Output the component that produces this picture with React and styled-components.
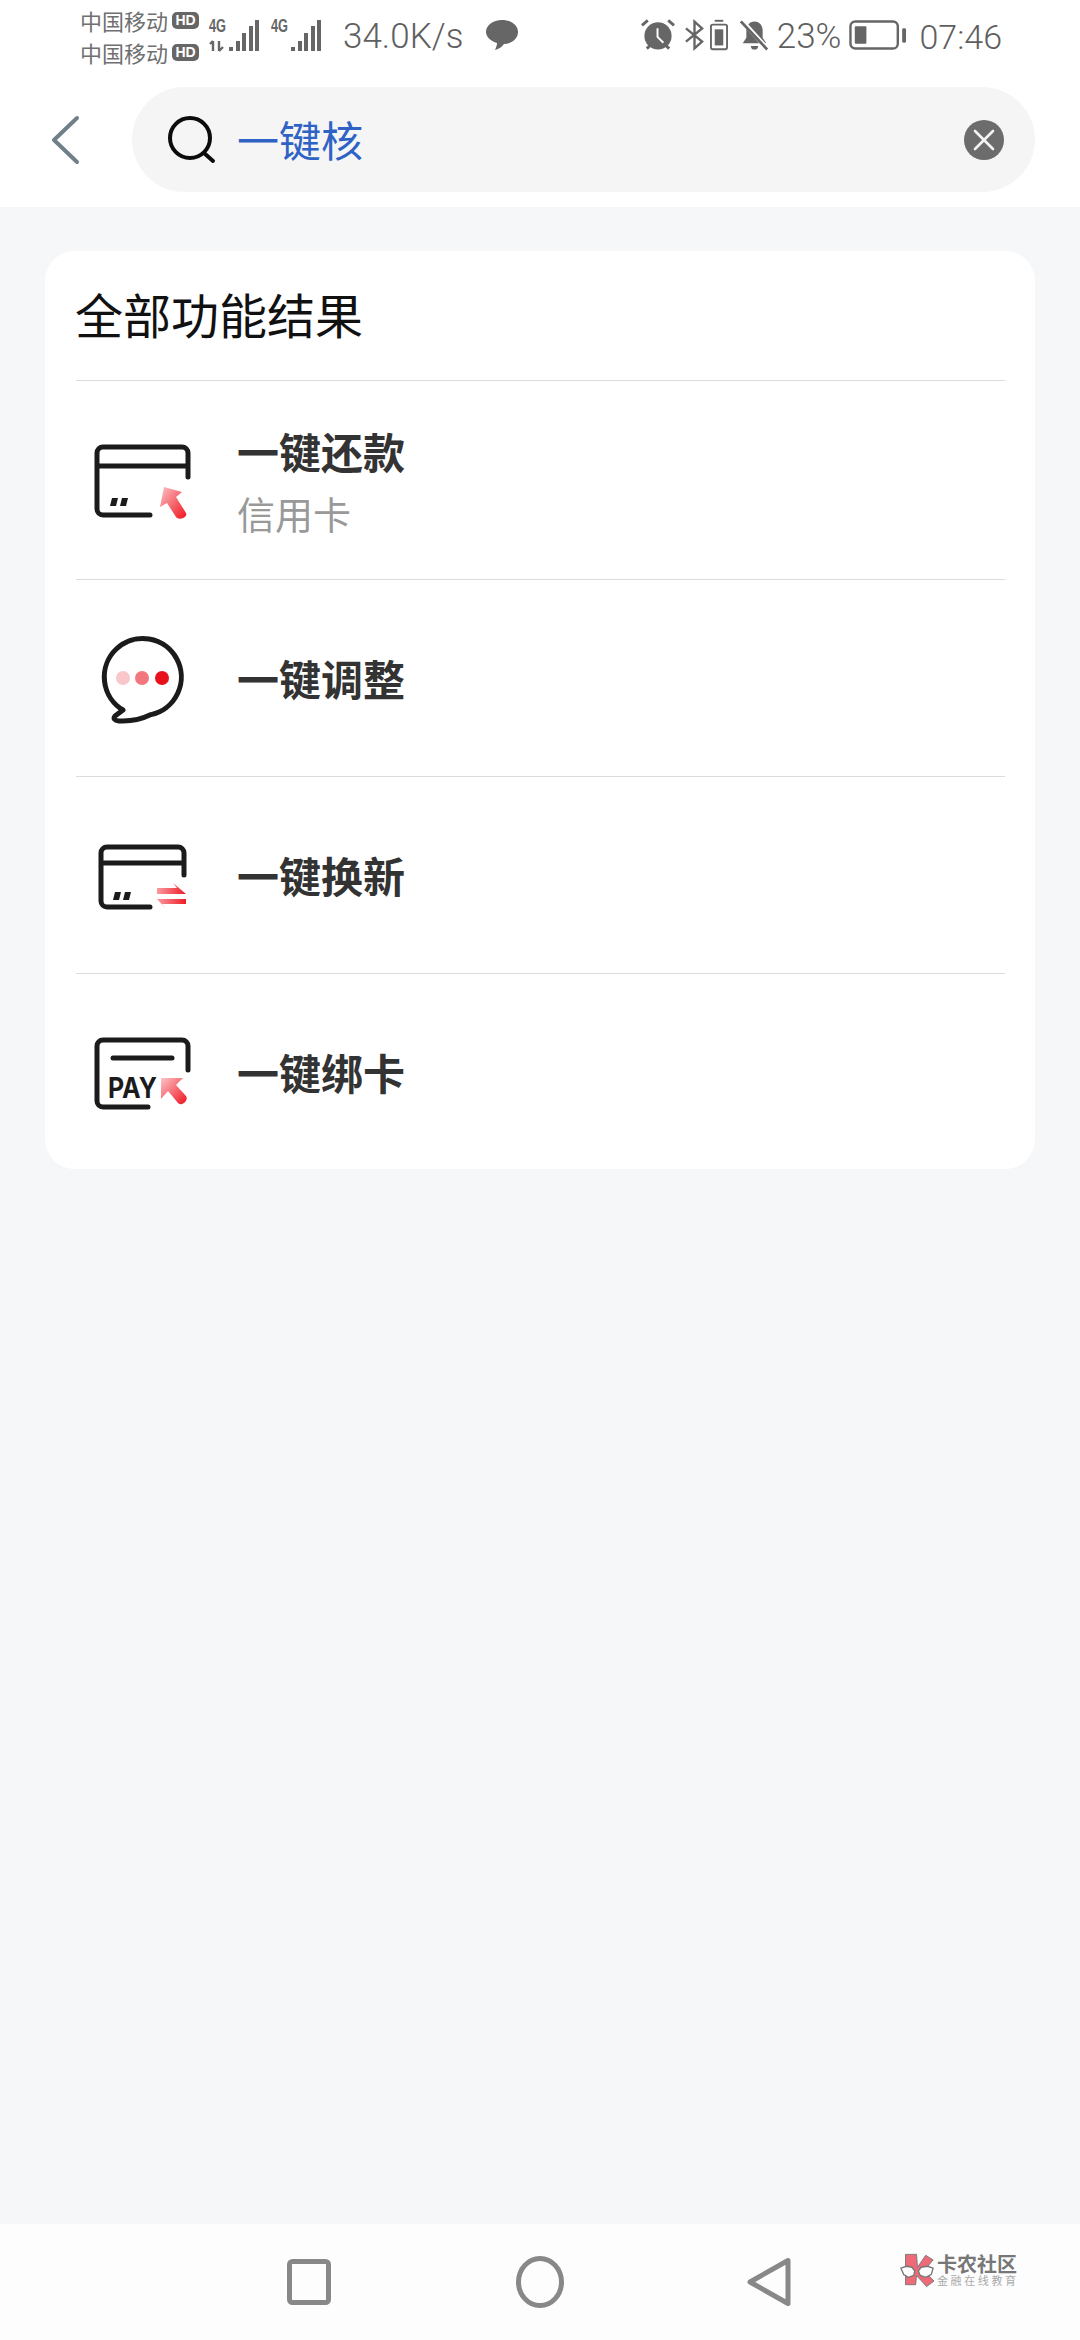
import React from 'react'
import styled, { createGlobalStyle } from 'styled-components'

const GlobalStyle = createGlobalStyle`
  * { box-sizing: border-box; }
  html, body { margin: 0; padding: 0; background: #f6f7f9; }
  body { font-family: "Noto Sans CJK SC", "Noto Sans", sans-serif; }
`

const Page = styled.div`
  width: 1080px;
  height: 2340px;
  display: flex;
  flex-direction: column;
  background: #f6f7f9;
  overflow: hidden;
  position: relative;
`
const Header = styled.header`
  height: 207px;
  background: #fff;
  flex-shrink: 0;
`
const StatusBar = styled.div`
  height: 70px;
  padding: 0 78px 0 80px;
  display: flex;
  align-items: center;
  justify-content: space-between;
  color: #666;
`
const StatusGroup = styled.div`
  display: flex;
  align-items: center;
`
const Carriers = styled.div`
  display: flex;
  flex-direction: column;
  gap: 8px;
  margin-top: 2px;
`
const Carrier = styled.div`
  display: flex;
  align-items: center;
  gap: 4px;
  height: 24px;
  font-size: 22px;
  line-height: 24px;
  color: #707070;
`
const HdBadge = styled.span`
  width: 27px;
  height: 17px;
  border-radius: 5px;
  background: #666;
  color: #fff;
  font: 700 14px/17px "Liberation Sans", sans-serif;
  text-align: center;
`
const StatusText = styled.span`
  margin-left: ${p => p.$ml || 0}px;
  margin-top: 4px;
  font-family: Roboto, "Noto Sans", sans-serif;
  font-weight: 300;
  font-size: ${p => p.$size || 35}px;
  line-height: 40px;
  color: #5f5f5f;
`
const StatusIcon = styled.svg`
  display: block;
  flex-shrink: 0;
  margin-left: ${p => p.$ml || 0}px;
`
const SearchRow = styled.div`
  height: 105px;
  margin-top: 17px;
  padding-left: 45px;
  display: flex;
  align-items: center;
`
const BackIcon = styled.svg`
  width: 40px;
  height: 50px;
  margin-right: 47px;
  flex-shrink: 0;
`
const SearchPill = styled.div`
  width: 903px;
  height: 105px;
  border-radius: 53px;
  background: #f5f5f6;
  display: flex;
  align-items: center;
  padding: 0 30px 0 32px;
`
const SearchIcon = styled.svg`
  width: 56px;
  height: 56px;
  margin-right: 17px;
  flex-shrink: 0;
`
const SearchText = styled.span`
  flex: 1;
  margin-top: -2px;
  font-size: 42px;
  line-height: 60px;
  color: #2f62c5;
`
const ClearIcon = styled.svg`
  width: 42px;
  height: 42px;
`
const Card = styled.section`
  margin: 44px 45px 0;
  padding: 0 30px 0 31px;
  background: #fff;
  border-radius: 30px;
`
const CardTitle = styled.h2`
  margin: 0 0 0 -1px;
  height: 129px;
  padding-top: 28px;
  font-size: 48px;
  line-height: 68px;
  font-weight: 400;
  color: #111;
`
const Row = styled.div`
  height: ${p => p.$height}px;
  border-top: 1px solid #dcdcdc;
  display: flex;
  align-items: center;
`
const RowIcon = styled.svg`
  width: 161px;
  height: 100px;
  flex-shrink: 0;
`
const RowText = styled.div`
  display: flex;
  flex-direction: column;
`
const RowTitle = styled.div`
  font-size: 42px;
  line-height: 60px;
  font-weight: 700;
  color: #333;
`
const RowSub = styled.div`
  font-size: 38px;
  line-height: 54px;
  margin-top: 5px;
  color: #999;
`
const NavBar = styled.nav`
  margin-top: auto;
  height: 116px;
  background: #fdfdfd;
  display: flex;
  align-items: center;
  padding-left: 279px;
  gap: 171px;
`
const NavIcon = styled.svg`
  width: 60px;
  height: 60px;
  fill: none;
  stroke: #888;
  stroke-width: 5;
  stroke-linejoin: round;
`
const Watermark = styled.div`
  position: absolute;
  left: 900px;
  top: 2253px;
  display: flex;
  align-items: center;
  gap: 3px;
`
const MarkText = styled.div`
  display: flex;
  flex-direction: column;
`
const MarkName = styled.span`
  font-size: 20px;
  line-height: 21px;
  font-weight: 700;
  color: #777;
`
const MarkSlogan = styled.span`
  font-size: 11px;
  line-height: 13px;
  letter-spacing: 2.6px;
  color: #aaa;
`

const Defs = () => (
  <svg width="0" height="0" style={{ position: 'absolute' }}>
    <defs>
      <linearGradient id="redUp" x1="0" y1="0" x2="1" y2="1">
        <stop offset="0" stopColor="#fbc4c8" />
        <stop offset="1" stopColor="#f0141e" />
      </linearGradient>
      <linearGradient id="redSide" x1="0" y1="0" x2="1" y2="0">
        <stop offset="0" stopColor="#fa9aa0" />
        <stop offset="1" stopColor="#ee1c25" />
      </linearGradient>
    </defs>
  </svg>
)

const Signal = ({ data, ml }) => (
  <StatusIcon $ml={ml} width="52" height="36" viewBox="0 0 52 36">
    <text x="0" y="15" fontFamily="Liberation Sans" fontWeight="700" fontSize="18" fill="#666" textLength="17" lengthAdjust="spacingAndGlyphs">4G</text>
    {data && (
      <path d="M4 24v10M1 27l3-3M10 24v10M10 34l4-4" stroke="#666" strokeWidth="2.4" fill="none" />
    )}
    <g fill="#666">
      <rect x="20" y="30" width="4" height="4" />
      <rect x="27" y="24" width="4" height="10" />
      <rect x="33" y="16" width="4" height="18" />
      <rect x="40" y="9" width="4" height="25" />
      <rect x="46" y="3" width="4" height="31" />
    </g>
  </StatusIcon>
)

// card frame, open at the lower right corner; the band line is left out when m is not given
const CardOutline = ({ l, r, t, m, b, rEnd, bEnd }) => (
  <path
    d={`M${r} ${rEnd}V${t + 6}a6 6 0 0 0-6-6H${l + 6}a6 6 0 0 0-6 6V${b - 6}a6 6 0 0 0 6 6H${bEnd}${m ? `M${l} ${m}H${r}` : ''}`}
    fill="none"
    stroke="#1b1b1b"
    strokeWidth="5"
    strokeLinecap="round"
  />
)

const Dashes = ({ x, y }) => (
  <g fill="#1b1b1b">
    <path d={`M${x + 2} ${y}h6l-2 8h-6z`} />
    <path d={`M${x + 12} ${y}h6l-2 8h-6z`} />
  </g>
)

const RepayIcon = () => (
  <RowIcon viewBox="0 0 161 100">
    <CardOutline l={21} r={112} t={17} m={36} b={85} rEnd={47} bEnd={74} />
    <Dashes x={34} y={68} />
    <path d="M88 57L106 62 100 67 110 83C112 87 103 91 100 87L91 73 84 77z" fill="url(#redUp)" />
  </RowIcon>
)

const AdjustIcon = () => (
  <RowIcon viewBox="0 0 161 100">
    <path
      d="M47 82A38.5 38.5 0 1 1 75 86.6Q60 94 43 93Q36 92 39 88z"
      fill="none"
      stroke="#1b1b1b"
      strokeWidth="5"
      strokeLinejoin="round"
    />
    <circle cx="47" cy="50" r="7" fill="#f9c6ca" />
    <circle cx="66" cy="50" r="7" fill="#f2767e" />
    <circle cx="86" cy="50" r="7" fill="#e8101a" />
  </RowIcon>
)

const RenewIcon = () => (
  <RowIcon viewBox="0 0 161 100">
    <CardOutline l={25} r={108} t={22} m={38} b={82} rEnd={50} bEnd={74} />
    <Dashes x={37} y={67} />
    <path d="M81 63H101L97 58 110 69H81z" fill="url(#redSide)" />
    <path d="M81 74H110V79H86L90 84z" fill="url(#redSide)" />
  </RowIcon>
)

const PayIcon = () => (
  <RowIcon viewBox="0 0 161 100">
    <CardOutline l={21} r={112} t={18} b={85} rEnd={48} bEnd={72} />
    <path d="M37 36h59" stroke="#1b1b1b" strokeWidth="5" strokeLinecap="round" />
    <text x="32" y="76" fontFamily="Inter, Liberation Sans, sans-serif" fontWeight="700" fontSize="28" fill="#1b1b1b" textLength="49" lengthAdjust="spacingAndGlyphs">PAY</text>
    <path d="M85 56H107L100 63 110 74C113 78 106 85 102 81L92 69 85 77z" fill="url(#redUp)" />
  </RowIcon>
)

const rows = [
  { title: '一键还款', sub: '信用卡', height: 199, Icon: RepayIcon },
  { title: '一键调整', height: 197, Icon: AdjustIcon },
  { title: '一键换新', height: 197, Icon: RenewIcon },
  { title: '一键绑卡', height: 196, Icon: PayIcon },
]

const App = () => (
  <Page>
    <GlobalStyle />
    <Defs />
    <Header>
      <StatusBar>
        <StatusGroup>
          <Carriers>
            <Carrier>中国移动<HdBadge>HD</HdBadge></Carrier>
            <Carrier>中国移动<HdBadge>HD</HdBadge></Carrier>
          </Carriers>
          <Signal data ml={10} />
          <Signal ml={10} />
          <StatusText $ml={20}>34.0K/s</StatusText>
          <StatusIcon $ml={22} width="34" height="32" viewBox="0 0 34 32">
            <path d="M17 1c9 0 16 5 16 12s-7 12-14 12c-2 3-5 5-9 6 1-2 2-5 2-7C6 22 1 18 1 13 1 6 8 1 17 1z" fill="#666" />
          </StatusIcon>
        </StatusGroup>
        <StatusGroup>
          <StatusIcon width="34" height="34" viewBox="0 0 35 34">
            <circle cx="17.5" cy="18" r="14" fill="#666" />
            <path d="M17 10v9l6 6" stroke="#fff" strokeWidth="2" fill="none" />
            <path d="M1 7l6-5M34 7l-6-5M6 31l3-3M29 31l-3-3" stroke="#666" strokeWidth="3" fill="none" />
          </StatusIcon>
          <StatusIcon $ml={10} width="19" height="32" viewBox="0 0 20 32">
            <path d="M1 9l17 14-8 7V2l8 7L1 23" stroke="#666" strokeWidth="2.5" fill="none" />
          </StatusIcon>
          <StatusIcon $ml={6} width="18" height="32" viewBox="0 0 19 32">
            <path d="M5 1h9" stroke="#666" strokeWidth="2" />
            <rect x="1" y="5" width="17" height="26" rx="2" fill="none" stroke="#666" strokeWidth="2" />
            <rect x="5" y="10" width="9" height="17" fill="#666" />
          </StatusIcon>
          <StatusIcon $ml={12} width="29" height="34" viewBox="0 0 32 34">
            <path d="M16 2c6 0 9 5 9 10v8l4 6H3l4-6v-8c0-5 3-10 9-10z" fill="#666" />
            <path d="M12 29a4 4 0 0 0 8 0z" fill="#666" />
            <path d="M3 2l27 30" stroke="#fff" strokeWidth="5" />
            <path d="M1 2l29 31" stroke="#666" strokeWidth="3" />
          </StatusIcon>
          <StatusText $ml={8}>23%</StatusText>
          <StatusIcon $ml={8} width="58" height="32" viewBox="0 0 60 32">
            <rect x="1.5" y="2" width="49" height="28" rx="5" fill="none" stroke="#666" strokeWidth="2.5" />
            <rect x="6" y="7" width="12" height="18" rx="1" fill="#666" />
            <rect x="55" y="9" width="4" height="15" rx="1.5" fill="#666" />
          </StatusIcon>
          <StatusText $ml={12} $size={34}>07:46</StatusText>
        </StatusGroup>
      </StatusBar>
      <SearchRow>
        <BackIcon viewBox="0 0 40 50">
          <path d="M32 3L9 25l23 22" fill="none" stroke="#6f8088" strokeWidth="4" strokeLinecap="round" strokeLinejoin="round" />
        </BackIcon>
        <SearchPill>
          <SearchIcon viewBox="0 0 56 56">
            <circle cx="26" cy="26" r="20" fill="none" stroke="#0c0c0c" strokeWidth="4" />
            <path d="M40 41l9 8" stroke="#0c0c0c" strokeWidth="4" strokeLinecap="round" />
          </SearchIcon>
          <SearchText>一键核</SearchText>
          <ClearIcon viewBox="0 0 42 42">
            <circle cx="21" cy="21" r="20" fill="#6c6c6c" />
            <path d="M12 12l18 18M30 12L12 30" stroke="#f4f4f5" strokeWidth="2.6" strokeLinecap="round" />
          </ClearIcon>
        </SearchPill>
      </SearchRow>
    </Header>
    <Card>
      <CardTitle>全部功能结果</CardTitle>
      {rows.map(({ title, sub, height, Icon }) => (
        <Row key={title} $height={height}>
          <Icon />
          <RowText>
            <RowTitle>{title}</RowTitle>
            {sub && <RowSub>{sub}</RowSub>}
          </RowText>
        </Row>
      ))}
    </Card>
    <NavBar>
      <NavIcon viewBox="0 0 60 60">
        <rect x="10.5" y="9.5" width="39" height="41" rx="3" />
      </NavIcon>
      <NavIcon viewBox="0 0 60 60">
        <ellipse cx="30" cy="30" rx="21.5" ry="23.5" />
      </NavIcon>
      <NavIcon viewBox="0 0 60 60">
        <path d="M9 30L47 8.5v43z" />
      </NavIcon>
    </NavBar>
    <Watermark>
      <svg width="34" height="34" viewBox="0 0 37 36">
        <path d="M6 1h12l1 14L28 2l8 5-10 12 11 11-8 6-11-12-1 10H6z" fill="#ee6a78" stroke="#777" strokeWidth="1" />
        <path d="M1 16l6-2 6 1 3 4-1 5-6 2-5-3zM20 19l3-4 7-1 6 2-2 7-6 3-6-2z" fill="#fff" stroke="#777" strokeWidth="1.5" />
      </svg>
      <MarkText>
        <MarkName>卡农社区</MarkName>
        <MarkSlogan>金融在线教育</MarkSlogan>
      </MarkText>
    </Watermark>
  </Page>
)

export default App
